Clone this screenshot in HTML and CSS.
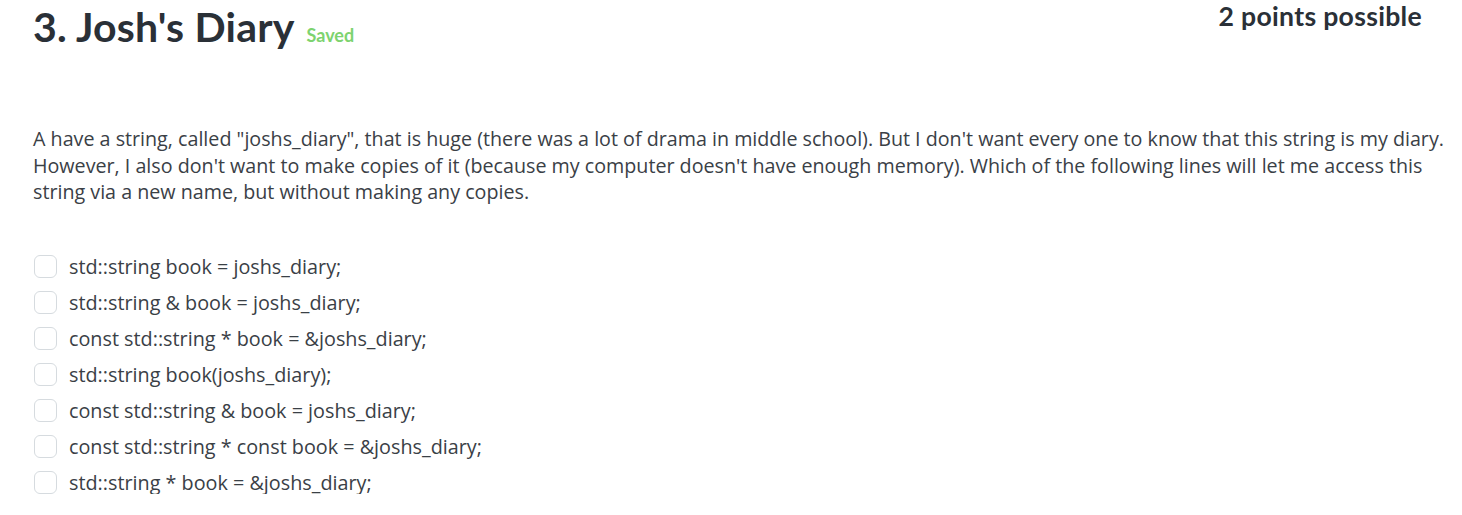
FILE: index.html
```html
<!DOCTYPE html>
<html>
<head>
<meta charset="utf-8">
<link rel="stylesheet" href="styles.css">
</head>
<body>
<div class="page">
  <header class="head">
    <div class="title-wrap">
      <h1 class="title">3. Josh's Diary</h1>
      <span class="saved">Saved</span>
    </div>
    <div class="points">2 points possible</div>
  </header>
  <p class="question">A have a string, called "joshs_diary", that is huge (there was a lot of drama in middle school). But I don't want every one to know that this string is my diary.<br>However, I also don't want to make copies of it (because my computer doesn't have enough memory). Which of the following lines will let me access this<br>string via a new name, but without making any copies.</p>
  <ul class="options">
    <li class="option"><span class="box"></span><span class="label">std::string book = joshs_diary;</span></li>
    <li class="option"><span class="box"></span><span class="label">std::string &amp; book = joshs_diary;</span></li>
    <li class="option"><span class="box"></span><span class="label">const std::string * book = &amp;joshs_diary;</span></li>
    <li class="option"><span class="box"></span><span class="label">std::string book(joshs_diary);</span></li>
    <li class="option"><span class="box"></span><span class="label">const std::string &amp; book = joshs_diary;</span></li>
    <li class="option"><span class="box"></span><span class="label">const std::string * const book = &amp;joshs_diary;</span></li>
    <li class="option"><span class="box"></span><span class="label">std::string * book = &amp;joshs_diary;</span></li>
  </ul>
</div>
</body>
</html>
```
FILE: styles.css
```css
html, body {
  margin: 0;
  padding: 0;
  background: #ffffff;
}
body {
  font-family: "Open Sans", "Lato", sans-serif;
  color: #2d3339;
}
.page {
  padding: 0 10px 0 33px;
}
.head {
  display: flex;
  justify-content: space-between;
  align-items: flex-start;
  height: 110px;
}
.title-wrap {
  display: flex;
  align-items: baseline;
  gap: 12px;
  padding-top: 2px;
}
.title {
  margin: 0;
  font-family: "Lato", sans-serif;
  font-size: 41px;
  font-weight: 700;
  line-height: 50px;
  letter-spacing: 0.2px;
  color: #2a3037;
}
.saved {
  font-family: "Lato", sans-serif;
  font-size: 18px;
  font-weight: 700;
  color: #7dd36f;
}
.points {
  font-family: "Lato", sans-serif;
  font-size: 26.6px;
  font-weight: 700;
  line-height: 30px;
  padding-top: 1px;
  margin-right: 30px;
  letter-spacing: 0.3px;
  color: #2a3037;
}
.question {
  margin: 16px 0 0 0;
  font-size: 19.7px;
  line-height: 26.5px;
  color: #3a4046;
  white-space: nowrap;
}
.options {
  list-style: none;
  margin: 50px 0 0 0;
  padding: 0;
  display: flex;
  flex-direction: column;
  gap: 14px;
}
.option {
  display: flex;
  align-items: center;
  gap: 12px;
  height: 22px;
  font-size: 19.8px;
  color: #3a4046;
}
.box {
  box-sizing: border-box;
  width: 23px;
  height: 23px;
  margin-left: 1px;
  border: 1.5px solid #d6dbdf;
  border-radius: 6px;
  flex-shrink: 0;
}
```
